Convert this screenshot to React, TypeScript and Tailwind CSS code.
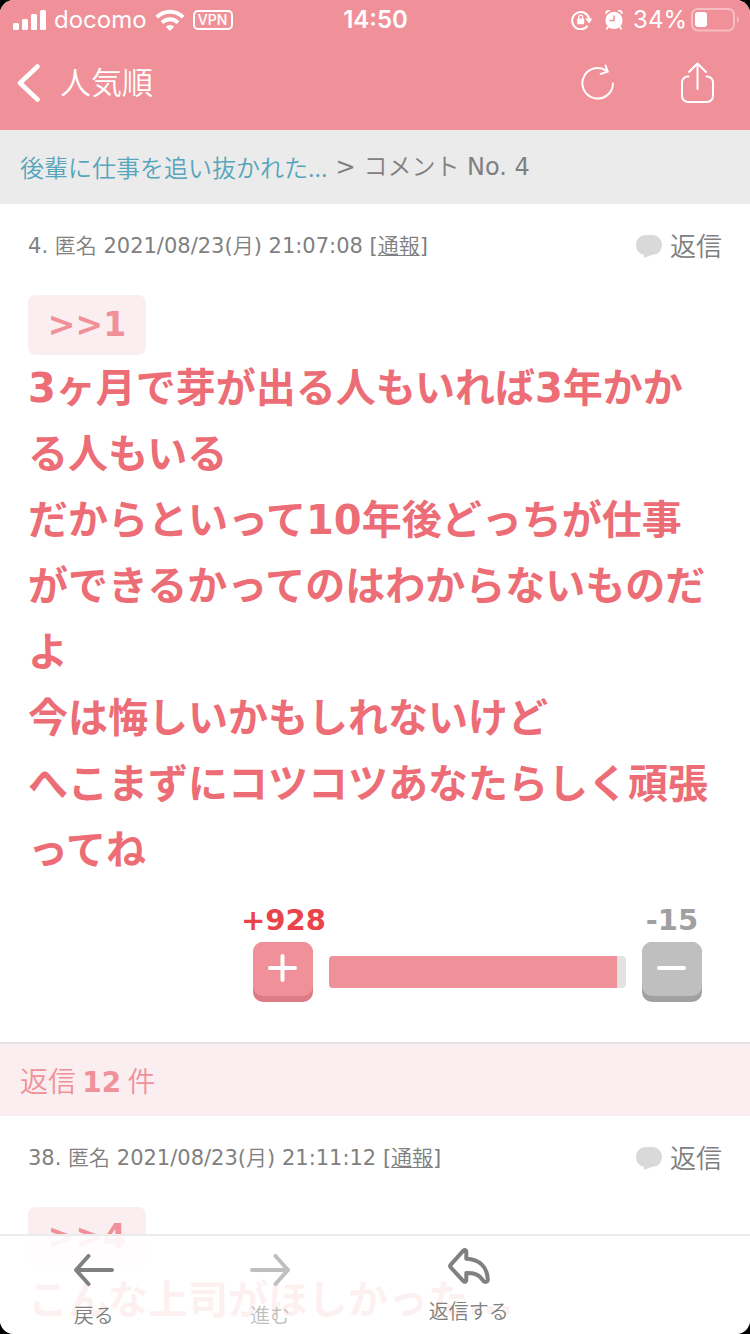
import type { ReactNode } from "react";

type Comment = {
  id: number;
  name: string;
  date: string;
  day: string;
  time: string;
  anchor: string;
  lines: string[];
  plus?: number;
  minus?: number;
};

const comments: Comment[] = [
  {
    id: 4,
    name: "匿名",
    date: "2021/08/23",
    day: "月",
    time: "21:07:08",
    anchor: ">>1",
    lines: [
      "3ヶ月で芽が出る人もいれば3年かかる人もいる",
      "だからといって10年後どっちが仕事ができるかってのはわからないものだよ",
      "今は悔しいかもしれないけど",
      "へこまずにコツコツあなたらしく頑張ってね",
    ],
    plus: 928,
    minus: 15,
  },
  {
    id: 38,
    name: "匿名",
    date: "2021/08/23",
    day: "月",
    time: "21:11:12",
    anchor: ">>4",
    lines: ["こんな上司がほしかった..."],
  },
];

function StatusBar() {
  return (
    <div className="grid h-10 grid-cols-[1fr_auto_1fr] items-center pr-[11px] pl-3 font-['Inter',sans-serif] text-2xl leading-10">
      <div className="flex items-center">
        <svg className="mr-2" width="34" height="22" viewBox="0 0 34 22" fill="#fff">
          <rect x="1" y="14" width="6" height="7" rx="1.5" />
          <rect x="10" y="10" width="6" height="11" rx="1.5" />
          <rect x="19" y="5" width="6" height="16" rx="1.5" />
          <rect x="28" y="1" width="6" height="20" rx="1.5" />
        </svg>
        <span className="mr-2">docomo</span>
        <svg className="mr-2" width="30" height="22" viewBox="0 0 30 22" fill="none" stroke="#fff" strokeWidth="4">
          <path d="M1.8 8.2a18.7 18.7 0 0 1 26.4 0" />
          <path d="M7 13.6a11.5 11.5 0 0 1 16 0" />
          <path d="M15 22l-4.2-4.3a6.2 6.2 0 0 1 8.4 0z" fill="#fff" stroke="none" />
        </svg>
        <span className="flex h-5 w-10 items-center justify-center rounded-[5px] border-2 border-white text-[14px] leading-4 font-medium">
          VPN
        </span>
      </div>

      <time className="font-semibold">14:50</time>

      <div className="flex items-center justify-end">
        {/* 画面回転ロック */}
        <svg className="mr-3" width="22" height="20" viewBox="0 0 22 20" fill="none">
          <path d="M16.6 15.9A8.6 8.6 0 1 1 18.2 9" stroke="#fff" strokeWidth="2" />
          <path d="M14.2 8.6h7.4l-3.6 5z" fill="#fff" />
          <rect x="6.2" y="8.6" width="7" height="5.6" rx="0.8" fill="#fff" />
          <path d="M7.7 9V7.2a2 2 0 0 1 4 0V9" stroke="#fff" strokeWidth="1.3" />
        </svg>
        {/* アラーム */}
        <svg className="mr-2.5" width="18" height="20" viewBox="0 0 18 20" fill="none">
          <circle cx="9" cy="10.4" r="8.6" fill="#fff" />
          <path d="M1 3.8A3 3 0 0 1 5 .9M17 3.8A3 3 0 0 0 13 .9" stroke="#fff" strokeWidth="1.8" />
          <path d="M3.4 16.6L1.4 19.4M14.6 16.6l2 2.8" stroke="#fff" strokeWidth="1.8" />
          <path d="M9 5.4v5.2H4.6" stroke="#f09199" strokeWidth="1.5" />
        </svg>
        <span className="mr-1">34%</span>
        <svg width="48" height="24" viewBox="0 0 48 24" fill="none">
          <rect x="1" y="1" width="42" height="21.4" rx="5.5" stroke="#fff" strokeOpacity="0.4" strokeWidth="2" />
          <rect x="4" y="4" width="12" height="15" rx="3" fill="#fff" />
          <path d="M46 8c2.4 1.4 2.4 6 0 7.4z" fill="#fff" fillOpacity="0.4" />
        </svg>
      </div>
    </div>
  );
}

function Header() {
  return (
    <header className="shrink-0 bg-[#f09199] text-white">
      <StatusBar />
      <div className="flex h-[90px] items-center justify-between pr-9 pb-1 pl-4">
        <button type="button" className="flex items-center gap-5 text-[31px] leading-10 font-[350]">
          <svg width="24" height="38" viewBox="0 0 24 38" fill="none" stroke="#fff" strokeWidth="4.5" strokeLinecap="round" strokeLinejoin="round">
            <path d="M21.5 2.5L4 19l17.5 16.5" />
          </svg>
          人気順
        </button>
        <div className="flex items-center gap-[66px]">
          <button type="button" aria-label="更新">
            <svg width="34" height="38" viewBox="0 0 34 38" fill="none" stroke="#fff" strokeWidth="2" strokeLinecap="round">
              <path d="M33 19.500a15.300 15.300 0 1 1-5.500-12" />
              <path d="M25.600 1.500l2 6.200-7 2.300" />
            </svg>
          </button>
          <button type="button" aria-label="共有">
            <svg width="34" height="42" viewBox="0 0 34 42" fill="none" stroke="#fff" strokeWidth="2" strokeLinecap="round" strokeLinejoin="round">
              <path d="M8.5 14.5H8a6 6 0 0 0-6 6V34a6 6 0 0 0 6 6h19a6 6 0 0 0 6-6V20.5a6 6 0 0 0-6-6h-.5" />
              <path d="M17.5 27V2M9 10l8.5-8.5L26 10" />
            </svg>
          </button>
        </div>
      </div>
    </header>
  );
}

function VoteButton({ label, color, children }: { label: string; color: string; children: ReactNode }) {
  return (
    <button
      type="button"
      aria-label={label}
      className={`flex h-[60px] w-[60px] justify-center rounded-[10px] ${color}`}
    >
      {children}
    </button>
  );
}

function Votes({ plus, minus }: { plus: number; minus: number }) {
  const rate = Math.round((plus / (plus + minus)) * 100) - 1;

  return (
    <div className="flex items-end justify-end gap-4 pt-[15px] pr-5">
      <div className="flex w-[60px] flex-col items-center">
        <span className="text-[29px] leading-[44px] font-bold text-[#ea4349]">+{plus}</span>
        <VoteButton label="プラス" color="bg-[#dc7b83]">
          <svg className="rounded-[10px] bg-[#f09199]" width="60" height="54" viewBox="0 0 60 54" stroke="#fff" strokeWidth="4" strokeLinecap="round">
            <path d="M17 26h25M29.5 14v24" />
          </svg>
        </VoteButton>
      </div>
      <div className="mb-[14px] flex h-8 w-[44%] overflow-hidden rounded bg-[#e2e2e2]">
        <div className="bg-[#f09199]" style={{ width: `${rate}%` }} />
      </div>
      <div className="flex w-[60px] flex-col items-center">
        <span className="text-[29px] leading-[44px] font-bold text-[#a0a0a0]">-{minus}</span>
        <VoteButton label="マイナス" color="bg-[#a1a1a1]">
          <svg className="rounded-[10px] bg-[#bfbfbf]" width="60" height="54" viewBox="0 0 60 54" stroke="#fff" strokeWidth="4" strokeLinecap="round">
            <path d="M17 26h25" />
          </svg>
        </VoteButton>
      </div>
    </div>
  );
}

function CommentItem({ comment }: { comment: Comment }) {
  return (
    <article className="px-7 pt-[25px] pb-10">
      <div className="flex h-9 items-center justify-between text-[#808080]">
        <p className="text-[21px]">
          {comment.id}. <span className="font-[350]">{comment.name}</span> {comment.date}(
          <span className="font-[350]">{comment.day}</span>) {comment.time} [
          <a href="#report" className="font-[350] underline decoration-1 underline-offset-2">
            通報
          </a>
          ]
        </p>
        <button type="button" className="flex items-center gap-2 text-[26px] leading-9 font-[350]">
          <svg width="26" height="24" viewBox="0 0 26 24" fill="#d9d9d9">
            <path d="M10 0h6c6 0 10 4.5 10 10s-4 9.8-9.5 9.8L8 23v-3.2C3.5 19 0 15.5 0 10S4 0 10 0z" />
          </svg>
          返信
        </button>
      </div>

      <a
        href="#anchor"
        className="mt-[30px] flex h-[60px] w-[118px] items-center justify-center rounded-lg bg-[#fbeef0] text-[33px] font-bold text-[#f09199]"
      >
        {comment.anchor}
      </a>
      {/* 本文 */}
      <div className="pr-2 text-[40px] leading-[66px] font-bold text-[#ec6d75]">
        {comment.lines.map((line) => (
          <p key={line}>{line}</p>
        ))}
      </div>

      {comment.plus !== undefined && comment.minus !== undefined && (
        <Votes plus={comment.plus} minus={comment.minus} />
      )}
    </article>
  );
}

function Toolbar() {
  return (
    <nav className="absolute inset-x-0 bottom-0 flex h-[100px] border-t-2 border-[#ebebeb] bg-white/90 text-[20px] leading-6 font-[350] text-[#808080]">
      <button type="button" className="flex w-1/4 flex-col items-center justify-end gap-4 pb-1.5">
        <svg width="40" height="34" viewBox="0 0 40 34" fill="none" stroke="#808080" strokeWidth="4" strokeLinecap="round" strokeLinejoin="round">
          <path d="M38 16H2M14.5 2L2 16l12.500 14" />
        </svg>
        戻る
      </button>
      <button type="button" disabled className="flex w-[22%] flex-col items-center justify-end gap-4 pb-1.5 text-[#bfbfbf]">
        <svg width="40" height="34" viewBox="0 0 40 34" fill="none" stroke="#bfbfbf" strokeWidth="4" strokeLinecap="round" strokeLinejoin="round">
          <path d="M2 16h36M25.5 2L38 16 25.500 30" />
        </svg>
        進む
      </button>
      <button type="button" className="flex w-[31%] flex-col items-center justify-end gap-4 pb-2.5">
        <svg width="42" height="36" viewBox="0 0 42 36" fill="none" stroke="#808080" strokeWidth="4" strokeLinejoin="round">
          <path d="M15.4 2.6L2.6 16.8c-.7.8-.7 1.6 0 2.4l12.800 14c1.200 1.200 2.900.6 2.900-1V25c8 0 12.500 1 16.500 7.200 1.500 2.600 5 2.200 5-.9C39.400 19.500 31.500 11 18.300 10.700V3.600c0-1.600-1.700-2.200-2.900-1z" />
        </svg>
        返信する
      </button>
    </nav>
  );
}

export default function App() {
  const [main, ...replies] = comments;

  return (
    <div className="h-screen bg-black font-['DejaVu_Sans','Noto_Sans_CJK_JP',sans-serif]" lang="ja">
      <div className="relative flex h-full flex-col overflow-hidden rounded-[14px] bg-white">
        <Header />
        <main>
          <div className="flex h-[74px] items-center gap-2 bg-[#ebebeb] px-5 text-[24px] text-[#808080]">
            <a href="#topic" className="font-['Noto_Sans_CJK_JP',sans-serif] font-[350] text-[#57a5bb]">
              後輩に仕事を追い抜かれた...
            </a>
            <span>&gt;</span>
            <span>
              <span className="font-[350]">コメント</span> No. 4
            </span>
          </div>

          <CommentItem comment={main} />

          <h2 className="h-[74px] border-t-2 border-[#e5e2e3] bg-[#fbeef0] px-5 font-['Noto_Sans_CJK_JP',sans-serif] text-[28px] leading-[72px] font-[350] text-[#f09199]">
            返信 <b className="font-['DejaVu_Sans',sans-serif] font-bold">12</b> 件
          </h2>
          {replies.map((reply) => (
            <CommentItem key={reply.id} comment={reply} />
          ))}
        </main>
        <Toolbar />
      </div>
    </div>
  );
}
